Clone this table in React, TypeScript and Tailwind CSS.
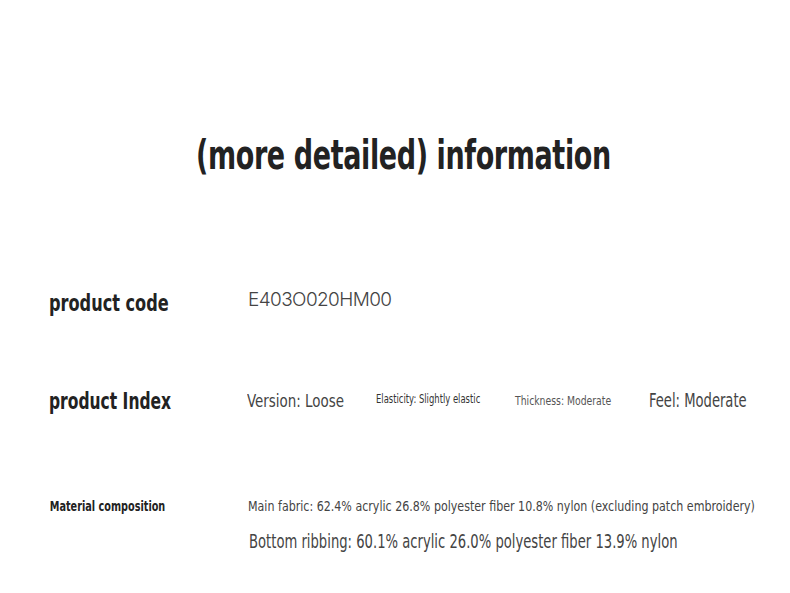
const narrow = { fontFamily: '"DejaVu Sans Condensed", "DejaVu Sans", sans-serif' };

const Row = ({ label, labelClass, children, className }: { label: React.ReactNode; labelClass: string; children: React.ReactNode; className?: string }) => (
    <div className={`flex flex-row items-start ${className ?? ""}`}>
        <div className={`w-[199px] shrink-0 text-[#222] whitespace-nowrap ${labelClass}`}>{label}</div>
        <div className="flex-grow">{children}</div>
    </div>
);

export default function App() {
    return (
        <div className="w-[790px] h-[593px] bg-white overflow-hidden" style={narrow}>
            <div className="pt-[131px] pl-[196px]">
                <h1 className="inline-block origin-left scale-x-[0.75] whitespace-nowrap text-[40px] leading-[48px] text-[#222] font-semibold tracking-[-0.5px]">
                    (more detailed) information
                </h1>
            </div>

            <div className="pl-[49px] pt-[109px] flex flex-col">
                <Row label={<span className="inline-block origin-left scale-x-[0.78]">product code</span>} labelClass="text-[23px] leading-[30px] font-semibold">
                    <div className="text-[19px] leading-[26px] -mt-px text-[#444] font-light tracking-[-0.6px]" style={{ fontFamily: 'Inter, "Liberation Sans", sans-serif' }}>
                        E403O020HM00
                    </div>
                </Row>

                <Row className="mt-[68px]" label={<span className="inline-block origin-left scale-x-[0.75]">product Index</span>} labelClass="text-[23px] leading-[30px] font-semibold">
                    <div className="flex flex-row items-center h-[30px] -ml-px -mt-px text-[#444] whitespace-nowrap">
                        <div className="w-[129px]">
                            <span className="inline-block origin-left scale-x-[0.83] text-[18px]">Version: Loose</span>
                        </div>
                        <div className="w-[139px] -mt-[5px]">
                            <span className="inline-block origin-left scale-x-[0.78] text-[12px] text-[#333]">Elasticity: Slightly elastic</span>
                        </div>
                        <div className="w-[134px]">
                            <span className="inline-block origin-left scale-x-[0.86] text-[12px] text-[#555]">Thickness: Moderate</span>
                        </div>
                        <div>
                            <span className="inline-block origin-left scale-x-[0.73] text-[20px]">Feel: Moderate</span>
                        </div>
                    </div>
                </Row>

                <Row className="mt-[79px]" label={<span className="inline-block origin-left scale-x-[0.77] pl-[1px]">Material composition</span>} labelClass="text-[14px] leading-[22px] font-semibold">
                    <div className="flex flex-col text-[#444] whitespace-nowrap">
                        <div className="text-[14px] leading-[22px]">
                            <span className="inline-block origin-left scale-x-[0.88]">Main fabric: 62.4% acrylic 26.8% polyester fiber 10.8% nylon (excluding patch embroidery)</span>
                        </div>
                        <div className="text-[19px] leading-[26px] mt-[11px] pl-[1px]">
                            <span className="inline-block origin-left scale-x-[0.77]">Bottom ribbing: 60.1% acrylic 26.0% polyester fiber 13.9% nylon</span>
                        </div>
                    </div>
                </Row>
            </div>
        </div>
    );
}
